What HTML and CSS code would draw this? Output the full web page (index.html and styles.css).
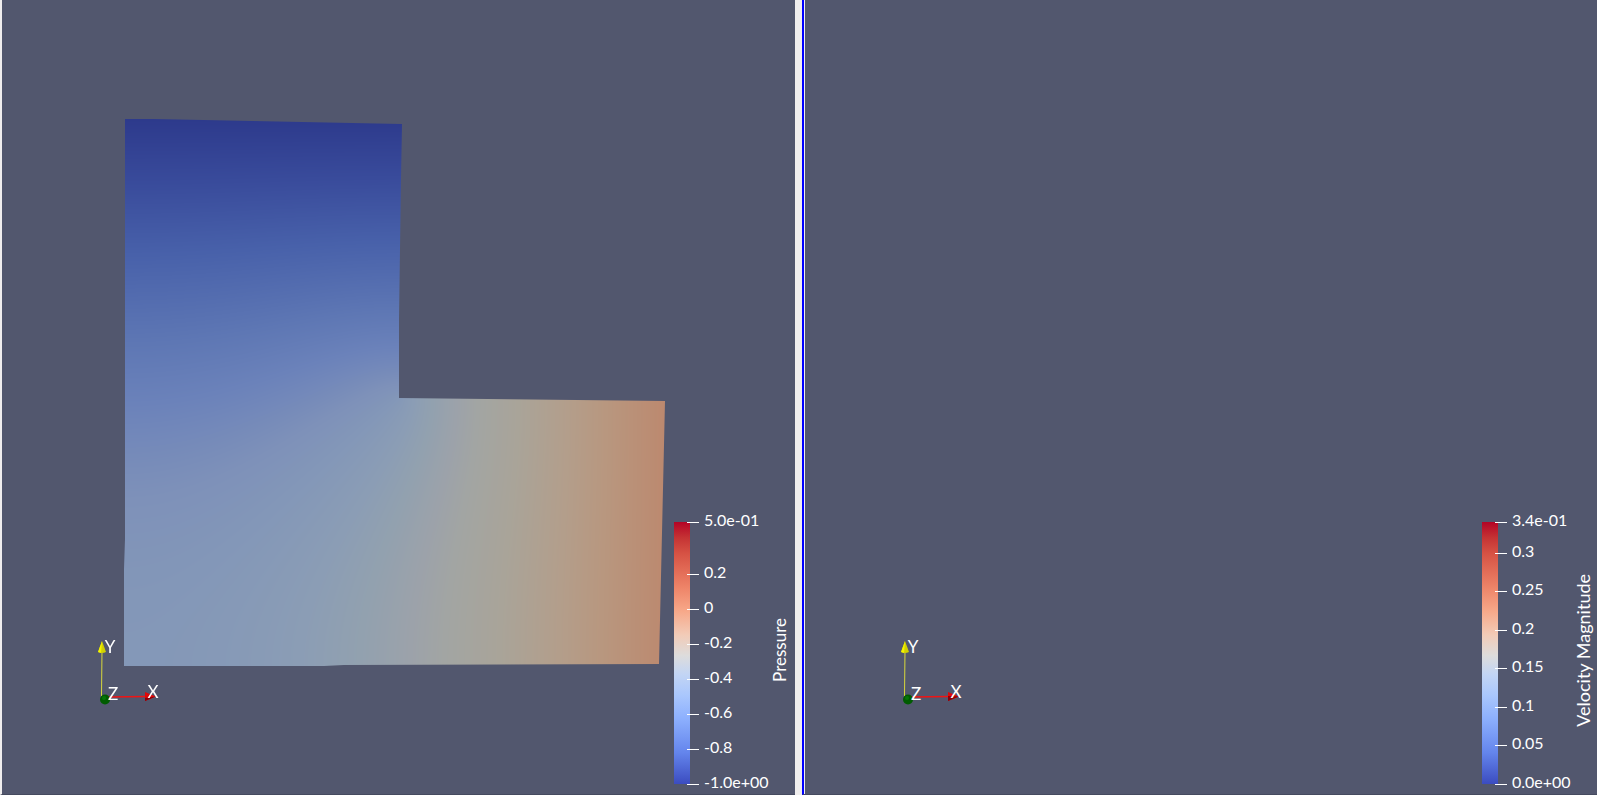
FILE: index.html
```html
<!DOCTYPE html>
<html lang="en">
<head>
<meta charset="utf-8">
<title>Pressure and Velocity</title>
<link rel="stylesheet" href="styles.css">
</head>
<body>
<main class="views">
  <section class="view view-pressure" aria-label="Pressure">
    <canvas class="field" id="field" width="542" height="548"></canvas>
    <svg class="axes" viewBox="0 0 80 80" aria-label="Orientation axes">
      <path d="M12 20L11.5 66" class="axis-y"/>
      <path d="M12 11L8 22Q12 24 16 22Z" class="head-y"/><path d="M12 11L8 22L11 23Z" class="shine-y"/>
      <path d="M17 67L56 66.5" class="axis-x"/>
      <path d="M55 62L66 66.5L55 71Z" class="head-x"/><path d="M55 68L66 66.5L55 71Z" class="shade-x"/>
      <circle cx="15" cy="69.5" r="5" class="ball"/><circle cx="14" cy="68" r="2" class="glint"/>
      <text x="20" y="23">Y</text><text x="23" y="70">Z</text><text x="63" y="68">X</text>
    </svg>
    <div class="legend">
      <div class="bar"></div>
      <ul class="ticks">
        <li style="top:0%">5.0e-01</li>
        <li style="top:20%">0.2</li>
        <li style="top:33.33%">0</li>
        <li style="top:46.67%">-0.2</li>
        <li style="top:60%">-0.4</li>
        <li style="top:73.33%">-0.6</li>
        <li style="top:86.67%">-0.8</li>
        <li style="top:100%">-1.0e+00</li>
      </ul>
    </div>
    <h2 class="title">Pressure</h2>
  </section>
  <div class="splitter"></div>
  <section class="view view-velocity" aria-label="Velocity Magnitude">
    <svg class="axes" viewBox="0 0 80 80" aria-label="Orientation axes">
      <path d="M12 20L11.5 66" class="axis-y"/>
      <path d="M12 11L8 22Q12 24 16 22Z" class="head-y"/><path d="M12 11L8 22L11 23Z" class="shine-y"/>
      <path d="M17 67L56 66.5" class="axis-x"/>
      <path d="M55 62L66 66.5L55 71Z" class="head-x"/><path d="M55 66L66 66.5L55 71Z" class="shade-x"/>
      <circle cx="15" cy="69.5" r="5" class="ball"/><circle cx="14" cy="68" r="2" class="glint"/>
      <text x="20" y="23">Y</text><text x="23" y="70">Z</text><text x="63" y="68">X</text>
    </svg>
    <div class="legend">
      <div class="bar"></div>
      <ul class="ticks">
        <li style="top:0%">3.4e-01</li>
        <li style="top:11.76%">0.3</li>
        <li style="top:26.47%">0.25</li>
        <li style="top:41.18%">0.2</li>
        <li style="top:55.88%">0.15</li>
        <li style="top:70.59%">0.1</li>
        <li style="top:85.29%">0.05</li>
        <li style="top:100%">0.0e+00</li>
      </ul>
    </div>
    <h2 class="title">Velocity Magnitude</h2>
  </section>
</main>
<script src="field.js"></script>
</body>
</html>
```
FILE: styles.css
```css
body {
  margin: 0;
  font-family: Lato, "Open Sans", sans-serif;
  color: #fff;
}
.views {
  display: flex;
  height: 100vh;
  background: #f0eeee;
}
.view {
  position: relative;
  flex: 1;
  overflow: hidden;
  box-sizing: border-box;
  background: #52576e;
  border-bottom: 1px solid #454a5f;
}
.view-pressure {
  border-left: 2px solid #f0eeee;
}
.splitter {
  width: 7px;
}
.view-velocity {
  border-left: 2px solid #0000ff;
  box-shadow: inset 1px 0 #f0eeee;
}
.field {
  position: absolute;
  left: 122px;
  top: 119px;
}
.axes {
  position: absolute;
  left: 88px;
  bottom: 84px;
  width: 80px;
  height: 80px;
}
.view-velocity .axes {
  left: 89px;
}
.axes text {
  fill: #fff;
  font-size: 17px;
  text-anchor: middle;
}
.axis-y { stroke: #d8d83c; stroke-width: 1; }
.head-y { fill: #d2d200; }
.shine-y { fill: #f4f400; }
.axis-x { stroke: #f01414; stroke-width: 1.3; }
.head-x { fill: #e00808; }
.shade-x { fill: #8c0008; }
.ball { fill: #005c00; }
.glint { fill: #067606; }
.legend {
  position: absolute;
  right: 96px;
  bottom: 10px;
  width: 25px;
  height: 262px;
}
.view-velocity .legend {
  right: 90px;
}
.bar {
  width: 16px;
  height: 100%;
  background: linear-gradient(#b40426, #c53334 6%, #d65244 12%, #ee8468 25%, #f7a889 34%, #f2cbb7 43%, #dddcdc 51%, #c3d5f4 58%, #aac7fd 66%, #8db0fe 75%, #6485ec 88%, #3b4cc0);
}
.ticks {
  position: absolute;
  left: 13px;
  top: 0;
  height: 100%;
  margin: 0;
  padding: 0;
  list-style: none;
}
.ticks li {
  position: absolute;
  left: 0;
  margin-top: -12px;
  padding-left: 17px;
  font-size: 16px;
  line-height: 20px;
  white-space: nowrap;
}
.ticks li::before {
  content: "";
  position: absolute;
  left: 0;
  top: 12px;
  width: 12px;
  height: 1px;
  background: #fff;
}
.title {
  position: absolute;
  right: 5px;
  bottom: 112px;
  margin: 0;
  font-size: 17px;
  font-weight: 400;
  line-height: 20px;
  writing-mode: vertical-rl;
  transform: rotate(180deg);
}
.view-velocity .title {
  right: 4px;
  bottom: 67px;
  font-size: 18px;
}
```
FILE: field.js
```javascript
// Potential in an L-shaped duct: 0 on the top edge, 1 on the right edge,
// insulated walls elsewhere.
const N = 40;
const S = 2 * N + 1;
const u = new Float64Array(S * S).fill(0.5);
const inside = (i, j) => i >= 0 && j >= 0 && i < S && j < S && (i <= N || j >= N);

for (let sweep = 0; sweep < 700; sweep++) {
  for (let j = 0; j < S; j++) {
    for (let i = 0; i < S; i++) {
      if (!inside(i, j)) continue;
      const k = j * S + i;
      if (j === 0) { u[k] = 0; continue; }
      if (i === S - 1) { u[k] = 1; continue; }
      const l = inside(i - 1, j) ? u[k - 1] : u[k + 1];
      const r = inside(i + 1, j) ? u[k + 1] : u[k - 1];
      const t = inside(i, j - 1) ? u[k - S] : u[k + S];
      const b = inside(i, j + 1) ? u[k + S] : u[k - S];
      u[k] += 1.9 * ((l + r + t + b) / 4 - u[k]);
    }
  }
}

const ramp = [
  [0, 45, 58, 140], [0.085, 57, 75, 155], [0.18, 72, 97, 170], [0.29, 94, 119, 180],
  [0.355, 107, 130, 186], [0.44, 126, 145, 185], [0.49, 131, 151, 184],
  [0.56, 139, 157, 181], [0.61, 146, 161, 175], [0.66, 156, 162, 170],
  [0.7, 162, 165, 163], [0.77, 169, 164, 153], [0.85, 179, 158, 139],
  [0.91, 184, 151, 127], [1, 188, 137, 111]
];

function shade(v) {
  let n = 1;
  while (n < ramp.length - 1 && v > ramp[n][0]) n++;
  const a = ramp[n - 1], b = ramp[n];
  const f = Math.min(1, Math.max(0, (v - a[0]) / (b[0] - a[0])));
  return [1, 2, 3].map(c => a[c] + (b[c] - a[c]) * f);
}

function sample(x, y) {
  const i = Math.min(S - 2, Math.floor(x)), j = Math.min(S - 2, Math.floor(y));
  let sum = 0, weight = 0;
  for (const [di, dj] of [[0, 0], [1, 0], [0, 1], [1, 1]]) {
    if (!inside(i + di, j + dj)) continue;
    const w = (di ? x - i : 1 - x + i) * (dj ? y - j : 1 - y + j);
    sum += w * u[(j + dj) * S + i + di];
    weight += w;
  }
  return sum / weight;
}

const canvas = document.getElementById("field");
const ctx = canvas.getContext("2d");
const { width, height } = canvas;
const layer = document.createElement("canvas");
layer.width = width;
layer.height = height;
const layerCtx = layer.getContext("2d");
const image = layerCtx.createImageData(width, height);
const cornerX = 275, cornerY = 279;

for (let y = 0; y < height; y++) {
  for (let x = 0; x < width; x++) {
    let gx = x < cornerX ? x / cornerX * N : N + (x - cornerX) / (540 - cornerX) * N;
    let gy = y < cornerY ? y / cornerY * N : N + (y - cornerY) / (547 - cornerY) * N;
    gx = Math.min(gx, 2 * N);
    gy = Math.min(gy, 2 * N);
    if (gx > N && gy < N) {
      if (x - cornerX < cornerY - y) gx = N; else gy = N;
    }
    const c = shade(sample(gx, gy));
    image.data.set([c[0], c[1], c[2], 255], (y * width + x) * 4);
  }
}
layerCtx.putImageData(image, 0, 0);

const outline = [[1, 0], [30, 0], [278, 5], [277, 60], [275, 200], [275, 279], [541, 282], [535, 545], [220, 546], [200, 547], [0, 547], [0, 450], [1, 420]];
ctx.beginPath();
outline.forEach(([x, y]) => ctx.lineTo(x, y));
ctx.closePath();
ctx.fillStyle = ctx.createPattern(layer, "no-repeat");
ctx.fill();
```
